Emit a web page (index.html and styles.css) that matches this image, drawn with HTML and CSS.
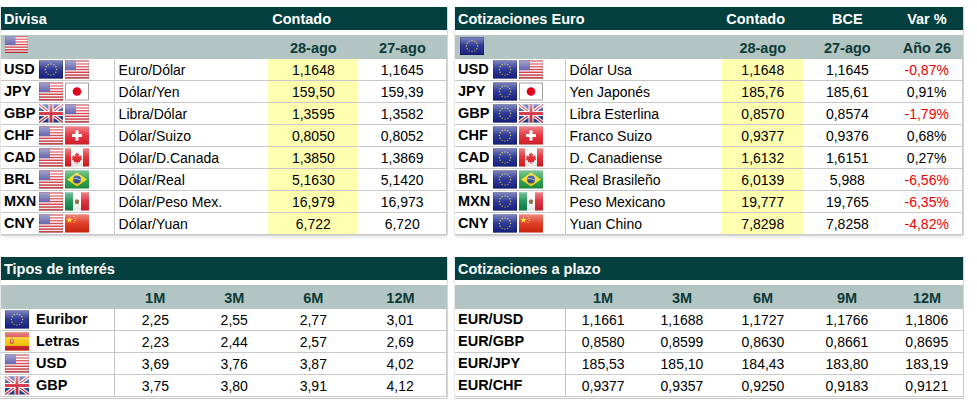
FILE: index.html
```html
<!DOCTYPE html>
<html lang="es">
<head>
<meta charset="utf-8">
<title>Divisas</title>
<link rel="stylesheet" href="styles.css">
</head>
<body>
<svg class="defs" width="0" height="0" aria-hidden="true">
  <defs>
    <linearGradient id="gloss" x1="0" y1="0" x2="0" y2="1">
      <stop offset="0" stop-color="#fff" stop-opacity="0.45"/>
      <stop offset="0.5" stop-color="#fff" stop-opacity="0.1"/>
      <stop offset="1" stop-color="#000" stop-opacity="0.12"/>
    </linearGradient>
    <symbol id="f-us" viewBox="0 0 24 18">
      <rect width="24" height="18" fill="#fff"/>
      <g fill="#d8363e">
        <rect y="0" width="24" height="1.4"/><rect y="2.77" width="24" height="1.4"/>
        <rect y="5.54" width="24" height="1.4"/><rect y="8.31" width="24" height="1.4"/>
        <rect y="11.08" width="24" height="1.4"/><rect y="13.85" width="24" height="1.4"/>
        <rect y="16.62" width="24" height="1.4"/>
      </g>
      <rect width="11" height="9.7" fill="#5a5aa8"/>
      <rect width="24" height="18" fill="url(#gloss)"/>
      <rect x="0.25" y="0.25" width="23.5" height="17.5" fill="none" stroke="#000" stroke-opacity="0.2" stroke-width="0.5"/>
    </symbol>
    <symbol id="f-eu" viewBox="0 0 24 18">
      <rect width="24" height="18" fill="#16238a"/>
      <g fill="#d9c230">
        <circle cx="12" cy="3.4" r="0.7"/><circle cx="14.8" cy="4.15" r="0.7"/>
        <circle cx="16.85" cy="6.2" r="0.7"/><circle cx="17.6" cy="9" r="0.7"/>
        <circle cx="16.85" cy="11.8" r="0.7"/><circle cx="14.8" cy="13.85" r="0.7"/>
        <circle cx="12" cy="14.6" r="0.7"/><circle cx="9.2" cy="13.85" r="0.7"/>
        <circle cx="7.15" cy="11.8" r="0.7"/><circle cx="6.4" cy="9" r="0.7"/>
        <circle cx="7.15" cy="6.2" r="0.7"/><circle cx="9.2" cy="4.15" r="0.7"/>
      </g>
      <rect width="24" height="18" fill="url(#gloss)"/>
      <rect x="0.25" y="0.25" width="23.5" height="17.5" fill="none" stroke="#000" stroke-opacity="0.35" stroke-width="0.5"/>
    </symbol>
    <symbol id="f-jp" viewBox="0 0 24 18">
      <rect x="0.5" y="0.5" width="23" height="17" fill="#fff" stroke="#a0a0a0"/>
      <circle cx="12" cy="9" r="4.3" fill="#e3001b"/>
    </symbol>
    <symbol id="f-gb" viewBox="0 0 24 18">
      <rect width="24" height="18" fill="#233d8f"/>
      <path d="M0 0L24 18M24 0L0 18" stroke="#fff" stroke-width="3.6"/>
      <path d="M0 0L24 18M24 0L0 18" stroke="#d3273a" stroke-width="1.2"/>
      <path d="M12 0V18M0 9H24" stroke="#fff" stroke-width="5"/>
      <path d="M12 0V18M0 9H24" stroke="#d3273a" stroke-width="2.8"/>
      <rect width="24" height="18" fill="url(#gloss)"/>
    </symbol>
    <symbol id="f-ch" viewBox="0 0 24 18">
      <rect width="24" height="18" fill="#e3202c"/>
      <rect x="10.5" y="4" width="3" height="10" fill="#fff"/>
      <rect x="7" y="7.5" width="10" height="3" fill="#fff"/>
      <rect width="24" height="18" fill="url(#gloss)"/>
    </symbol>
    <symbol id="f-ca" viewBox="0 0 24 18">
      <rect width="24" height="18" fill="#fff"/>
      <rect width="6" height="18" fill="#e11b22"/>
      <rect x="18" width="6" height="18" fill="#e11b22"/>
      <path d="M12 3.5L13 5.6L14.2 5L13.8 8.3L15.6 6.8L16.2 8L17 7.8L16.4 10.4L17.3 11L14.8 12.6L15 14L12.4 13.5V15.5H11.6V13.5L9 14L9.2 12.6L6.7 11L7.6 10.4L7 7.8L7.8 8L8.4 6.8L10.2 8.3L9.8 5L11 5.6Z" fill="#e11b22"/>
      <rect width="24" height="18" fill="url(#gloss)"/>
    </symbol>
    <symbol id="f-br" viewBox="0 0 24 18">
      <rect width="24" height="18" fill="#1f9a43"/>
      <path d="M12 2L22 9L12 16L2 9Z" fill="#f8d90f"/>
      <circle cx="12" cy="9" r="4" fill="#24408f"/>
      <path d="M8.2 8.2Q12 7.3 15.8 9.6" stroke="#fff" stroke-width="0.6" fill="none"/>
      <rect width="24" height="18" fill="url(#gloss)"/>
    </symbol>
    <symbol id="f-mx" viewBox="0 0 24 18">
      <rect width="24" height="18" fill="#fff"/>
      <rect width="8" height="18" fill="#0c8a4a"/>
      <rect x="16" width="8" height="18" fill="#d81e2c"/>
      <circle cx="12" cy="9" r="2.2" fill="#8a5a2b"/>
      <path d="M10 10.5Q12 12.5 14 10.5" stroke="#3b8a3a" stroke-width="0.7" fill="none"/>
      <rect width="24" height="18" fill="url(#gloss)"/>
    </symbol>
    <symbol id="f-cn" viewBox="0 0 24 18">
      <rect width="24" height="18" fill="#de2910"/>
      <path d="M4.5 2L5.3 4.4H7.8L5.8 5.9L6.5 8.3L4.5 6.8L2.5 8.3L3.2 5.9L1.2 4.4H3.7Z" fill="#ffde00"/>
      <circle cx="9" cy="2" r="0.6" fill="#ffde00"/>
      <circle cx="10.2" cy="3.8" r="0.6" fill="#ffde00"/>
      <circle cx="10.2" cy="6.2" r="0.6" fill="#ffde00"/>
      <circle cx="9" cy="7.8" r="0.6" fill="#ffde00"/>
      <rect width="24" height="18" fill="url(#gloss)"/>
    </symbol>
    <symbol id="f-es" viewBox="0 0 24 18">
      <rect width="24" height="18" fill="#f4c300"/>
      <rect width="24" height="4.5" fill="#d61f26"/>
      <rect y="13.5" width="24" height="4.5" fill="#d61f26"/>
      <rect x="5" y="6.8" width="3.6" height="4.4" rx="1" fill="#c8372a"/>
      <rect x="5.8" y="7.6" width="2" height="2.4" fill="#f0b080"/>
      <rect width="24" height="18" fill="url(#gloss)"/>
    </symbol>
  </defs>
</svg>

<main class="page">
  <section class="panel">
    <table class="fx">
      <colgroup><col style="width:113px"><col style="width:154px"><col style="width:90px"><col style="width:88px"></colgroup>
      <thead>
        <tr class="hd"><th colspan="2">Divisa</th><th class="hd-ct">Contado</th><th></th></tr>
        <tr class="gap"><td colspan="4"></td></tr>
        <tr class="sub"><th colspan="2" class="sub-flag"><svg class="flag-big"><use href="#f-us"/></svg></th><th>28-ago</th><th>27-ago</th></tr>
      </thead>
      <tbody>
        <tr><td class="pair"><span class="code">USD</span><svg class="flag"><use href="#f-eu"/></svg><svg class="flag"><use href="#f-us"/></svg></td><td class="name">Euro/Dólar</td><td class="yel">1,1648</td><td class="last">1,1645</td></tr>
        <tr><td class="pair"><span class="code">JPY</span><svg class="flag"><use href="#f-us"/></svg><svg class="flag"><use href="#f-jp"/></svg></td><td class="name">Dólar/Yen</td><td class="yel">159,50</td><td class="last">159,39</td></tr>
        <tr><td class="pair"><span class="code">GBP</span><svg class="flag"><use href="#f-gb"/></svg><svg class="flag"><use href="#f-us"/></svg></td><td class="name">Libra/Dólar</td><td class="yel">1,3595</td><td class="last">1,3582</td></tr>
        <tr><td class="pair"><span class="code">CHF</span><svg class="flag"><use href="#f-us"/></svg><svg class="flag"><use href="#f-ch"/></svg></td><td class="name">Dólar/Suizo</td><td class="yel">0,8050</td><td class="last">0,8052</td></tr>
        <tr><td class="pair"><span class="code">CAD</span><svg class="flag"><use href="#f-us"/></svg><svg class="flag"><use href="#f-ca"/></svg></td><td class="name">Dólar/D.Canada</td><td class="yel">1,3850</td><td class="last">1,3869</td></tr>
        <tr><td class="pair"><span class="code">BRL</span><svg class="flag"><use href="#f-us"/></svg><svg class="flag"><use href="#f-br"/></svg></td><td class="name">Dólar/Real</td><td class="yel">5,1630</td><td class="last">5,1420</td></tr>
        <tr><td class="pair"><span class="code">MXN</span><svg class="flag"><use href="#f-us"/></svg><svg class="flag"><use href="#f-mx"/></svg></td><td class="name">Dólar/Peso Mex.</td><td class="yel">16,979</td><td class="last">16,973</td></tr>
        <tr><td class="pair"><span class="code">CNY</span><svg class="flag"><use href="#f-us"/></svg><svg class="flag"><use href="#f-cn"/></svg></td><td class="name">Dólar/Yuan</td><td class="yel">6,722</td><td class="last">6,720</td></tr>
      </tbody>
    </table>
  </section>

  <section class="panel">
    <table class="fx">
      <colgroup><col style="width:110px"><col style="width:157px"><col style="width:81px"><col style="width:88px"><col style="width:71px"></colgroup>
      <thead>
        <tr class="hd"><th colspan="2">Cotizaciones Euro</th><th class="hd-ct">Contado</th><th class="c">BCE</th><th class="c">Var %</th></tr>
        <tr class="gap"><td colspan="5"></td></tr>
        <tr class="sub"><th colspan="2" class="sub-flag sub-eu"><svg class="flag-eu"><use href="#f-eu"/></svg></th><th>28-ago</th><th>27-ago</th><th>Año 26</th></tr>
      </thead>
      <tbody>
        <tr><td class="pair"><span class="code">USD</span><svg class="flag"><use href="#f-eu"/></svg><svg class="flag"><use href="#f-us"/></svg></td><td class="name">Dólar Usa</td><td class="yel">1,1648</td><td>1,1645</td><td class="last neg">-0,87%</td></tr>
        <tr><td class="pair"><span class="code">JPY</span><svg class="flag"><use href="#f-eu"/></svg><svg class="flag"><use href="#f-jp"/></svg></td><td class="name">Yen Japonés</td><td class="yel">185,76</td><td>185,61</td><td class="last">0,91%</td></tr>
        <tr><td class="pair"><span class="code">GBP</span><svg class="flag"><use href="#f-eu"/></svg><svg class="flag"><use href="#f-gb"/></svg></td><td class="name">Libra Esterlina</td><td class="yel">0,8570</td><td>0,8574</td><td class="last neg">-1,79%</td></tr>
        <tr><td class="pair"><span class="code">CHF</span><svg class="flag"><use href="#f-eu"/></svg><svg class="flag"><use href="#f-ch"/></svg></td><td class="name">Franco Suizo</td><td class="yel">0,9377</td><td>0,9376</td><td class="last">0,68%</td></tr>
        <tr><td class="pair"><span class="code">CAD</span><svg class="flag"><use href="#f-eu"/></svg><svg class="flag"><use href="#f-ca"/></svg></td><td class="name">D. Canadiense</td><td class="yel">1,6132</td><td>1,6151</td><td class="last">0,27%</td></tr>
        <tr><td class="pair"><span class="code">BRL</span><svg class="flag"><use href="#f-eu"/></svg><svg class="flag"><use href="#f-br"/></svg></td><td class="name">Real Brasileño</td><td class="yel">6,0139</td><td>5,988</td><td class="last neg">-6,56%</td></tr>
        <tr><td class="pair"><span class="code">MXN</span><svg class="flag"><use href="#f-eu"/></svg><svg class="flag"><use href="#f-mx"/></svg></td><td class="name">Peso Mexicano</td><td class="yel">19,777</td><td>19,765</td><td class="last neg">-6,35%</td></tr>
        <tr><td class="pair"><span class="code">CNY</span><svg class="flag"><use href="#f-eu"/></svg><svg class="flag"><use href="#f-cn"/></svg></td><td class="name">Yuan Chino</td><td class="yel">7,8298</td><td>7,8258</td><td class="last neg">-4,82%</td></tr>
      </tbody>
    </table>
  </section>

  <section class="panel">
    <table class="fx">
      <colgroup><col style="width:113px"><col style="width:82px"><col style="width:76px"><col style="width:82px"><col style="width:92px"></colgroup>
      <thead>
        <tr class="hd"><th colspan="5">Tipos de interés</th></tr>
        <tr class="gap"><td colspan="5"></td></tr>
        <tr class="sub"><th></th><th>1M</th><th>3M</th><th>6M</th><th>12M</th></tr>
      </thead>
      <tbody class="rates">
        <tr><td class="pair rate"><svg class="flag"><use href="#f-eu"/></svg><span class="rname">Euribor</span></td><td>2,25</td><td>2,55</td><td>2,77</td><td class="last">3,01</td></tr>
        <tr><td class="pair rate"><svg class="flag"><use href="#f-es"/></svg><span class="rname">Letras</span></td><td>2,23</td><td>2,44</td><td>2,57</td><td class="last">2,69</td></tr>
        <tr><td class="pair rate"><svg class="flag"><use href="#f-us"/></svg><span class="rname">USD</span></td><td>3,69</td><td>3,76</td><td>3,87</td><td class="last">4,02</td></tr>
        <tr><td class="pair rate"><svg class="flag"><use href="#f-gb"/></svg><span class="rname">GBP</span></td><td>3,75</td><td>3,80</td><td>3,91</td><td class="last">4,12</td></tr>
      </tbody>
    </table>
  </section>

  <section class="panel">
    <table class="fx">
      <colgroup><col style="width:110px"><col style="width:76px"><col style="width:82px"><col style="width:80px"><col style="width:88px"><col style="width:72px"></colgroup>
      <thead>
        <tr class="hd"><th colspan="6">Cotizaciones a plazo</th></tr>
        <tr class="gap"><td colspan="6"></td></tr>
        <tr class="sub"><th></th><th>1M</th><th>3M</th><th>6M</th><th>9M</th><th>12M</th></tr>
      </thead>
      <tbody class="rates">
        <tr><td class="pair"><span class="fwd">EUR/USD</span></td><td>1,1661</td><td>1,1688</td><td>1,1727</td><td>1,1766</td><td class="last">1,1806</td></tr>
        <tr><td class="pair"><span class="fwd">EUR/GBP</span></td><td>0,8580</td><td>0,8599</td><td>0,8630</td><td>0,8661</td><td class="last">0,8695</td></tr>
        <tr><td class="pair"><span class="fwd">EUR/JPY</span></td><td>185,53</td><td>185,10</td><td>184,43</td><td>183,80</td><td class="last">183,19</td></tr>
        <tr><td class="pair"><span class="fwd">EUR/CHF</span></td><td>0,9377</td><td>0,9357</td><td>0,9250</td><td>0,9183</td><td class="last">0,9121</td></tr>
      </tbody>
    </table>
  </section>
</main>
</body>
</html>
```

FILE: styles.css
```css
html, body {
  margin: 0;
  padding: 0;
  background: #fff;
}

.defs {
  position: absolute;
  width: 0;
  height: 0;
  overflow: hidden;
}

.page {
  display: grid;
  grid-template-columns: 446px 508px;
  grid-template-rows: 228px auto;
  column-gap: 8px;
  row-gap: 22px;
  padding: 7px 0 0 1px;
  font-family: "Liberation Sans", Arial, sans-serif;
  font-size: 14px;
  color: #000;
}

.panel {
  align-self: start;
  box-shadow: 0 1px 0 #d6d6d6, 1px 0 0 #d6d6d6, -1px 0 0 #e8e8e8, 0 4px 3px -1px rgba(0, 0, 0, 0.08);
}

.fx {
  border-collapse: collapse;
  table-layout: fixed;
  width: 100%;
}

.fx th,
.fx td {
  padding: 0;
  white-space: nowrap;
  overflow: hidden;
}

.hd th {
  background: #033f3e;
  color: #fff;
  font-weight: bold;
  font-size: 14.5px;
  height: 23px;
  text-align: left;
  padding-left: 3px;
  vertical-align: middle;
}

.hd th.hd-ct {
  padding-left: 4px;
}

.hd th.c {
  text-align: center;
  padding-left: 0;
}

.gap td {
  height: 5px;
  background: #fff;
}

.sub th {
  background: #b3c5c2;
  color: #0c3a38;
  font-weight: bold;
  font-size: 14.5px;
  height: 22px;
  text-align: center;
  vertical-align: middle;
  padding-top: 2px;
}

.sub th.sub-flag {
  text-align: left;
  padding: 0 0 0 2px;
  vertical-align: top;
}

.sub th.sub-eu {
  padding-left: 5px;
}

.flag-big {
  display: block;
  width: 27px;
  height: 17px;
  margin-top: 1px;
}

.flag-eu {
  display: block;
  width: 24px;
  height: 18px;
  margin-top: 2px;
}

tbody td {
  height: 21px;
  border-bottom: 1px solid #c8c8c8;
  text-align: center;
  vertical-align: middle;
}

tbody td.pair {
  border-right: 1px solid #c8c8c8;
  text-align: left;
}

tbody td.pair,
tbody td.pair > * {
  vertical-align: middle;
}

.pair {
  line-height: 0;
}

.code {
  display: inline-block;
  width: 38px;
  padding-left: 3px;
  box-sizing: border-box;
  font-weight: bold;
  font-size: 14.5px;
  line-height: 21px;
}

.flag {
  display: inline-block;
  width: 24px;
  height: 19px;
  margin-right: 2px;
}

.rate .flag {
  margin-left: 4px;
  margin-right: 7px;
}

.rname,
.fwd {
  display: inline-block;
  font-weight: bold;
  font-size: 14.5px;
  line-height: 21px;
}

.fwd {
  padding-left: 3px;
}

tbody td.name {
  text-align: left;
  padding-left: 4px;
}

tbody td.yel {
  background: #ffffb0;
}

tbody td.last {
  border-right: 1px solid #c8c8c8;
}

tbody td.neg {
  color: #f00000;
}

tbody.rates tr:last-child td {
  border-bottom: 3px double #c8c8c8;
}
```
